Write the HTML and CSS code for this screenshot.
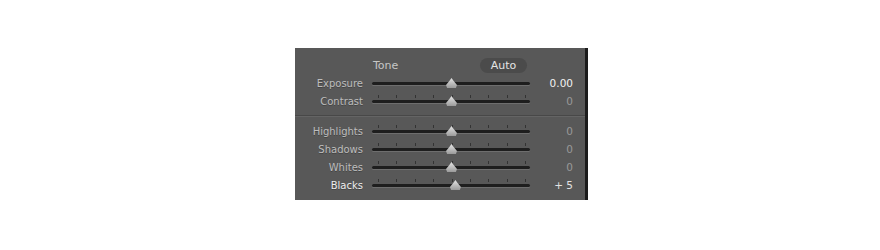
FILE: index.html
```html
<!DOCTYPE html>
<html>
<head>
<meta charset="utf-8">
<link rel="stylesheet" href="styles.css">
</head>
<body>
<div class="stage">
  <section class="panel">
    <div class="header">
      <span class="spacer"></span>
      <div class="header-mid">
        <span class="title">Tone</span>
        <span class="auto">Auto</span>
      </div>
    </div>
    <div class="group">
      <div class="row">
        <span class="label">Exposure</span>
        <div class="slider">
          <div class="track"></div>
          <div class="thumb" style="left:50%"></div>
        </div>
        <span class="value bright">0.00</span>
      </div>
      <div class="row">
        <span class="label">Contrast</span>
        <div class="slider">
          <div class="ticks"><i></i><i></i><i></i><i></i><i></i><i></i><i></i><i></i><i></i></div>
          <div class="track"></div>
          <div class="thumb" style="left:50%"></div>
        </div>
        <span class="value dim">0</span>
      </div>
    </div>
    <div class="divider"></div>
    <div class="group">
      <div class="row">
        <span class="label">Highlights</span>
        <div class="slider">
          <div class="ticks"><i></i><i></i><i></i><i></i><i></i><i></i><i></i><i></i><i></i></div>
          <div class="track"></div>
          <div class="thumb" style="left:50%"></div>
        </div>
        <span class="value dim">0</span>
      </div>
      <div class="row">
        <span class="label">Shadows</span>
        <div class="slider">
          <div class="ticks"><i></i><i></i><i></i><i></i><i></i><i></i><i></i><i></i><i></i></div>
          <div class="track"></div>
          <div class="thumb" style="left:50%"></div>
        </div>
        <span class="value dim">0</span>
      </div>
      <div class="row">
        <span class="label">Whites</span>
        <div class="slider">
          <div class="ticks"><i></i><i></i><i></i><i></i><i></i><i></i><i></i><i></i><i></i></div>
          <div class="track"></div>
          <div class="thumb" style="left:50%"></div>
        </div>
        <span class="value dim">0</span>
      </div>
      <div class="row">
        <span class="label active">Blacks</span>
        <div class="slider">
          <div class="ticks"><i></i><i></i><i></i><i></i><i></i><i></i><i></i><i></i><i></i></div>
          <div class="track"></div>
          <div class="thumb" style="left:52.5%"></div>
        </div>
        <span class="value light">+ 5</span>
      </div>
    </div>
  </section>
</div>
</body>
</html>
```

FILE: styles.css
```css
* { box-sizing: border-box; }
html, body { margin: 0; padding: 0; background: #ffffff; }
.stage {
  padding: 48px 0 0 295px;
}
.panel {
  width: 293px;
  height: 152px;
  background: #585858;
  border-right: 3px solid #1c1c1c;
  padding-top: 8px;
  font-family: "DejaVu Sans", "Liberation Sans", sans-serif;
  font-size: 10px;
  color: #c4c4c4;
}
.header, .row {
  display: grid;
  grid-template-columns: 68px 158px 34px;
  column-gap: 9px;
  align-items: center;
}
.header { height: 18px; }
.header-mid {
  display: flex;
  justify-content: space-between;
  align-items: center;
}
.title {
  font-size: 11px;
  color: #c6c6c6;
  padding-left: 1px;
}
.auto {
  display: inline-block;
  width: 47px;
  height: 15px;
  line-height: 15px;
  text-align: center;
  border-radius: 8px;
  background: #4b4b4b;
  color: #e4e4e4;
  font-size: 11px;
  margin-right: 3px;
}
.row { height: 18px; }
.label {
  text-align: right;
  color: #bdbdbd;
  text-shadow: 0 1px 0 rgba(0,0,0,0.25);
}
.label.active { color: #ececec; }
.value { text-align: right; font-size: 10.5px; }
.value.bright { color: #f2f2f2; }
.value.dim { color: #999999; }
.value.light { color: #e2e2e2; }
.slider {
  position: relative;
  height: 18px;
}
.track {
  position: absolute;
  left: 0;
  right: 0;
  top: 8px;
  height: 3px;
  border-radius: 2px;
  background: #1e1e1e;
  box-shadow: 0 1px 0 #6e6e6e;
}
.ticks {
  position: absolute;
  left: 6px;
  right: 4px;
  top: 3px;
  height: 3px;
  display: flex;
  justify-content: space-between;
}
.ticks i {
  display: block;
  width: 1px;
  height: 3px;
  background: #333333;
}
.thumb {
  position: absolute;
  top: 4px;
  width: 11px;
  height: 10px;
  margin-left: -5px;
  background: linear-gradient(#e6e6e6, #9a9a9a);
  clip-path: polygon(50% 0, 70% 30%, 100% 70%, 90% 100%, 10% 100%, 0 70%, 30% 30%);
}
.divider {
  margin-top: 5px;
  margin-bottom: 5px;
  height: 2px;
  border-top: 1px solid #484848;
  border-bottom: 1px solid #646464;
}
```
